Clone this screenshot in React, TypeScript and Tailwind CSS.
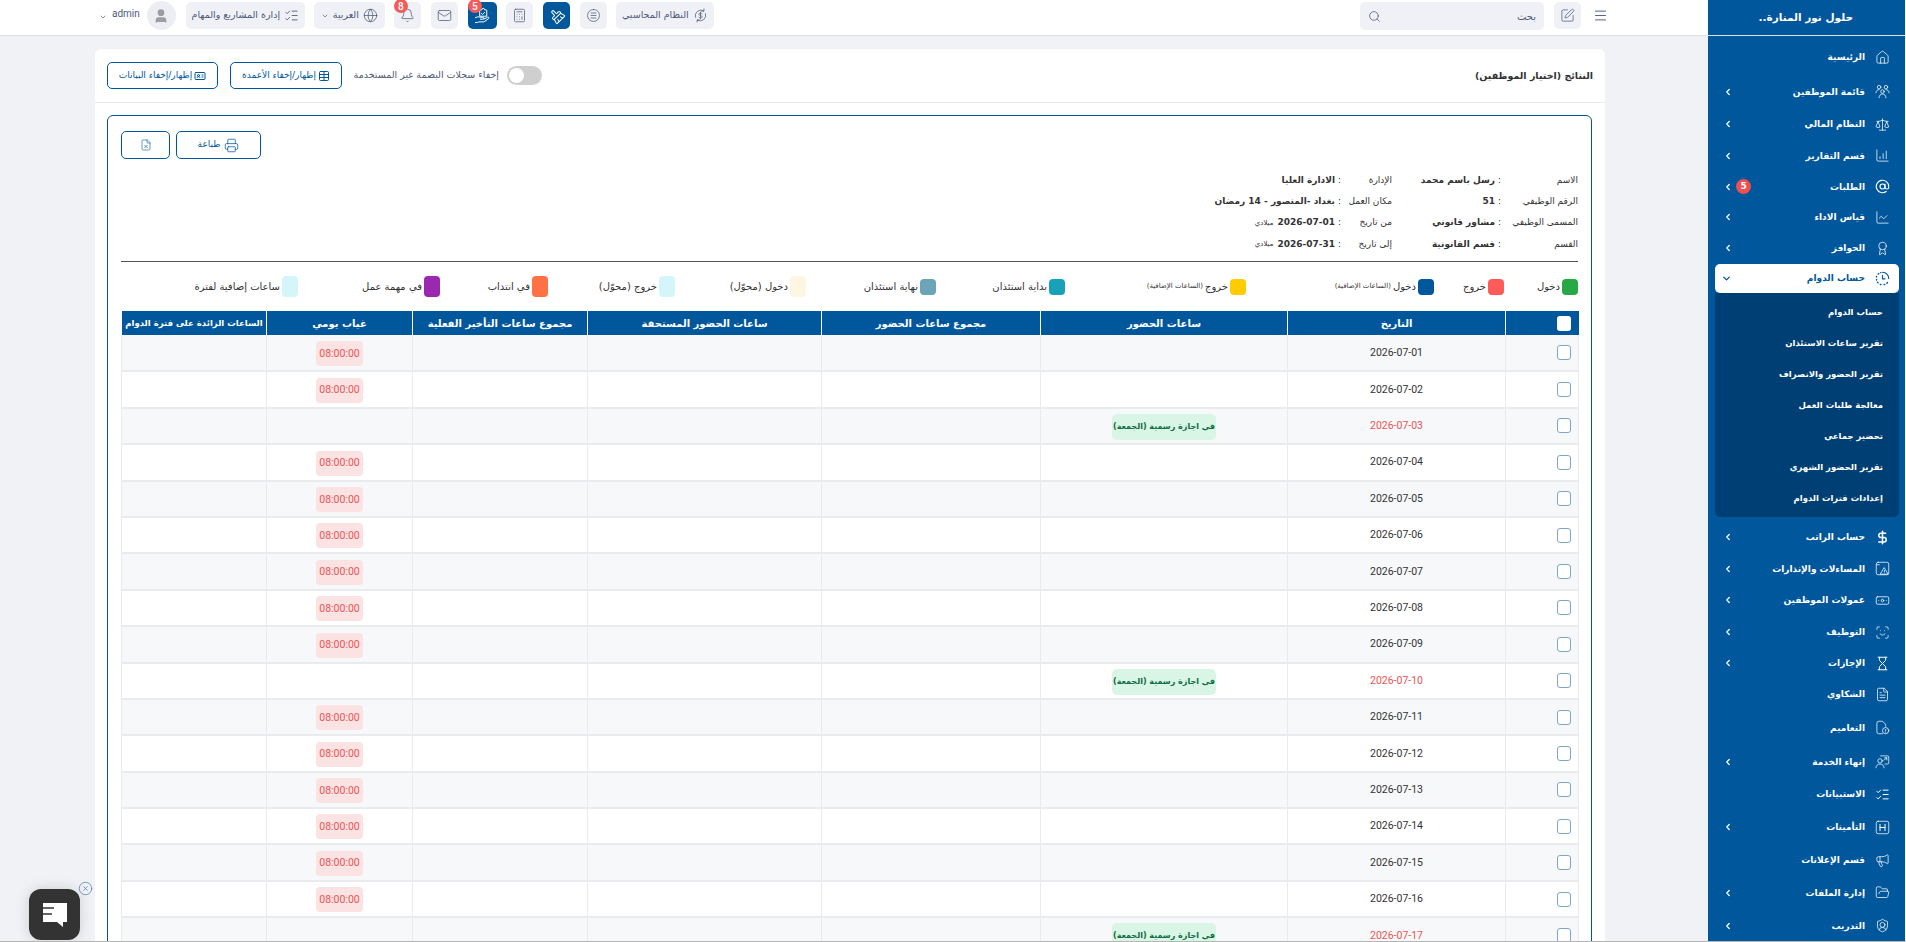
import type { ReactNode } from 'react';
import {
  AtSign,
  Award,
  Banknote,
  Bell,
  BrushCleaning,
  Calculator,
  ChartColumnIncreasing,
  ChartLine,
  ChevronDown,
  ChevronLeft,
  CircleX,
  DollarSign,
  FileText,
  FileX,
  FolderOpen,
  Globe,
  Hourglass,
  House,
  IdCard,
  ListChecks,
  Mail,
  Megaphone,
  Menu,
  Printer,
  ScanFace,
  Scale,
  Search,
  ShieldUser,
  SquarePen,
  Table,
  User,
} from 'lucide-react';

const ar = "font-['DejaVu_Sans',sans-serif]";

interface NavItem {
  label: string;
  icon: ReactNode;
  h: string;
  arrow?: boolean;
  badge?: string;
}

const ic = 'h-[15px] w-[15px]';

const Svg = ({ children, className = ic, sw = 1.2 }: { children: ReactNode; className?: string; sw?: number }) => (
  <svg viewBox="0 0 24 24" className={className} fill="none" stroke="currentColor" strokeWidth={sw} strokeLinecap="round" strokeLinejoin="round">
    {children}
  </svg>
);

const HSquare = () => (
  <Svg>
    <rect x="2" y="2" width="20" height="20" rx="3" />
    <path d="M8 7v10M16 7v10M8 12h8" strokeWidth={1.6} />
  </Svg>
);

const ThreePeople = () => (
  <Svg>
    <circle cx="6.5" cy="5" r="2.8" />
    <circle cx="17.5" cy="5" r="2.8" />
    <circle cx="12" cy="12" r="2.8" />
    <path d="M1.5 14c0-3 2-5 5-5M22.5 14c0-3-2-5-5-5M6.5 22c0-3.5 2.2-6 5.5-6s5.5 2.500 5.500 6" />
  </Svg>
);

const DashedClock = () => (
  <Svg sw={1.8}>
    <path d="M12 2a10 10 0 0 1 10 10" />
    <path d="M20 18.500l-1 1M15.500 21.500h-1M9.500 21.500h-1M5 19l-1-1M2.500 14.500v-1M2.500 9.500v-1M5 5l1-1M9 2.500h.5" strokeWidth={2.2} />
    <path d="M12 7v5.500h4" />
  </Svg>
);

const RectAlert = () => (
  <Svg>
    <rect x="2" y="2" width="20" height="20" rx="3" />
    <path d="M15 11l6 10H9zM15 15v2M15 19v.1M3 6h4" />
  </Svg>
);

const FileInfo = () => (
  <Svg>
    <path d="M12 22H6a3 3 0 0 1-3-3V5a3 3 0 0 1 3-3h6l5 5v3" />
    <circle cx="17" cy="17" r="5" />
    <path d="M17 15v2.500M17 19.500v.1" />
  </Svg>
);

const PersonBoard = () => (
  <Svg>
    <path d="M9 3h11a2 2 0 0 1 2 2v9a2 2 0 0 1-2 2h-4" />
    <circle cx="8" cy="11" r="3.500" />
    <path d="M1.500 22c0-3.500 2.800-6 6.500-6s6.500 2.500 6.500 6M14 10l5-4M15.500 6H19v3.500" />
  </Svg>
);

const ExchangeDollar = () => (
  <Svg>
    <path d="M4 15a9 9 0 0 1 13-10.500M20 9a9 9 0 0 1-13 10.500" />
    <path d="M17.500 1.500v3.500H14M6.500 22.500V19H10" />
    <path d="M14.500 9.500c-.5-1-1.400-1.500-2.500-1.500-1.500 0-2.500.8-2.500 2s1 1.700 2.500 2 2.500.8 2.500 2-1 2-2.500 2c-1.100 0-2-.5-2.500-1.500M12 6.500v11" />
  </Svg>
);

const NoteBlob = () => (
  <Svg>
    <path d="M12 2.500c5.500 0 9.500 4 9.500 9.500s-4 9.500-9.500 9.500-9.500-4-9.500-9.500 4-9.500 9.500-9.500z" />
    <path d="M8 8h8M8 12h8M8 16h8" />
  </Svg>
);

const HandClipboard = () => (
  <Svg className="h-[17px] w-[17px]" sw={1.4}>
    <path d="M9 4h2a2 2 0 0 1 4 0h2a1 1 0 0 1 1 1v8H8V5a1 1 0 0 1 1-1z" />
    <path d="M10.500 9l1.500 1.500 3-3" />
    <path d="M2 15l3-1c1.500-.5 2.500 0 3.500.5h4a1.300 1.300 0 0 1 0 2.700H9M14 17l5-2.500c1.800-.8 3 1 1.500 2L14 21H7l-2 .8L2 22" />
  </Svg>
);

const navTop: NavItem[] = [
  { label: 'الرئيسية', icon: <House className={ic} strokeWidth={1.2} />, h: 'h-[36px]' },
  { label: 'قائمة الموظفين', icon: <ThreePeople />, h: 'h-[33px]', arrow: true },
  { label: 'النظام المالي', icon: <Scale className={ic} strokeWidth={1.2} />, h: 'h-[32px]', arrow: true },
  { label: 'قسم التقارير', icon: <ChartColumnIncreasing className={ic} strokeWidth={1.2} />, h: 'h-[31px]', arrow: true },
  { label: 'الطلبات', icon: <AtSign className={ic} strokeWidth={1.8} />, h: 'h-[31px]', arrow: true, badge: '5' },
  { label: 'قياس الاداء', icon: <ChartLine className={ic} strokeWidth={1.2} />, h: 'h-[30px]', arrow: true },
  { label: 'الحوافز', icon: <Award className={ic} strokeWidth={1.2} />, h: 'h-[32px]', arrow: true },
];

const subItems = [
  'حساب الدوام',
  'تقرير ساعات الاستئذان',
  'تقرير الحضور والانصراف',
  'معالجة طلبات العمل',
  'تحضير جماعي',
  'تقرير الحضور الشهري',
  'إعدادات فترات الدوام',
];

const navBottom: NavItem[] = [
  { label: 'حساب الراتب', icon: <DollarSign className={ic} strokeWidth={2.4} />, h: 'h-[32px] mt-1', arrow: true },
  { label: 'المساءلات والإنذارات', icon: <RectAlert />, h: 'h-[31px]', arrow: true },
  { label: 'عمولات الموظفين', icon: <Banknote className={ic} strokeWidth={1.2} />, h: 'h-[32px]', arrow: true },
  { label: 'التوظيف', icon: <ScanFace className={ic} strokeWidth={1.2} />, h: 'h-[32px]', arrow: true },
  { label: 'الإجازات', icon: <Hourglass className={ic} strokeWidth={1.6} />, h: 'h-[30px]', arrow: true },
  { label: 'الشكاوي', icon: <FileText className={ic} strokeWidth={1.2} />, h: 'h-[32px]' },
  { label: 'التعاميم', icon: <FileInfo />, h: 'h-[35px]' },
  { label: 'إنهاء الخدمة', icon: <PersonBoard />, h: 'h-[33px]', arrow: true },
  { label: 'الاستبيانات', icon: <ListChecks className={ic} strokeWidth={1.6} />, h: 'h-[32px]' },
  { label: 'التأمينات', icon: <HSquare />, h: 'h-[34px]', arrow: true },
  { label: 'قسم الإعلانات', icon: <Megaphone className={ic} strokeWidth={1.2} />, h: 'h-[32px]' },
  { label: 'إدارة الملفات', icon: <FolderOpen className={ic} strokeWidth={1.2} />, h: 'h-[33px]', arrow: true },
  { label: 'التدريب', icon: <ShieldUser className={ic} strokeWidth={1.2} />, h: 'h-[33px]', arrow: true },
];

const NavRow = ({ item }: { item: NavItem }) => (
  <div className={`flex items-center pr-[16px] pl-[15px] text-white ${item.h}`}>
    <span className="flex w-[15px] shrink-0 justify-center">{item.icon}</span>
    <span className={`mr-[10px] truncate pt-[2px] text-[9px] font-bold ${item.badge ? '' : 'flex-1'}`}>{item.label}</span>
    {item.badge && (
      <span className="mr-auto ml-[3px] flex h-[15px] w-[15px] items-center justify-center rounded-full bg-[#ef4f4f] text-[9px] font-bold">
        {item.badge}
      </span>
    )}
    {item.arrow && <ChevronLeft className="h-[10px] w-[10px] shrink-0" strokeWidth={3} />}
  </div>
);

const Sidebar = () => (
  <aside dir="rtl" className={`${ar} w-[198px] shrink-0 bg-[#01579b]`}>
    <div className="flex h-[36px] items-center border-b border-[#d8e4ef] pr-[53px] text-[10.500px] font-bold text-white">
      حلول نور المنارة..
    </div>
    <div className="pt-[3px]">
      {navTop.map((item) => (
        <NavRow key={item.label} item={item} />
      ))}
    </div>
    <div className="mx-[7px]">
      <div className="flex h-[29px] items-center rounded-[5px] bg-white pr-[9px] pl-[6px] text-[#01579b]">
        <DashedClock />
        <span className="mr-[10px] flex-1 pt-[1px] text-[9px] font-bold">حساب الدوام</span>
        <ChevronDown className="h-[11px] w-[11px]" strokeWidth={3} />
      </div>
      <div className="h-[224px] rounded-b-[5px] bg-[#003f73] pt-[3px]">
        {subItems.map((s) => (
          <div key={s} className="flex h-[31px] items-center pt-[2px] pr-[16px] text-[8.500px] font-semibold text-white">
            {s}
          </div>
        ))}
      </div>
    </div>
    {navBottom.map((item) => (
      <NavRow key={item.label} item={item} />
    ))}
  </aside>
);

const TopBtn = ({ children, className = '' }: { children: ReactNode; className?: string }) => (
  <div className={`relative flex h-[27px] items-center justify-center rounded-[5px] ${className}`}>
    {children}
  </div>
);

const gray = 'bg-[#f0f1f6] text-[#4f5a78]';
const blue = 'bg-[#01579b] text-white';

const Topbar = () => (
  <header className="flex h-[36px] shrink-0 items-start justify-between border-b border-[#dfe1e6] bg-white pt-[2px] pr-[100px] pl-[99px]">
    <div className="flex items-start">
      <ChevronDown className="mt-[11px] h-[8px] w-[8px] text-[#4f5a78]" strokeWidth={2} />
      <span className="mt-[4px] ml-[5px] font-['Roboto',sans-serif] text-[10px] text-[#4f5a78]">admin</span>
      <div className="-mt-[1px] ml-[7px] flex h-[29px] w-[29px] items-center justify-center rounded-full bg-[#eceef3]">
        <User className="h-[16px] w-[16px] fill-[#9a9da3] text-[#9a9da3]" />
      </div>
      <TopBtn className={`ml-[10px] w-[119px] gap-1 ${gray}`}>
        <span dir="rtl" className={`${ar} text-[9.500px]`}>إدارة المشاريع والمهام</span>
        <ListChecks className="h-[15px] w-[15px]" strokeWidth={1.4} />
      </TopBtn>
      <TopBtn className={`ml-[9px] w-[71px] gap-1 ${gray}`}>
        <ChevronDown className="h-[8px] w-[8px]" />
        <span dir="rtl" className={`${ar} text-[9.500px]`}>العربية</span>
        <Globe className="h-[15px] w-[15px]" strokeWidth={1.2} />
      </TopBtn>
      <TopBtn className={`ml-[9px] w-[27px] ${gray}`}>
        <Bell className="h-[15px] w-[15px]" strokeWidth={1.2} />
        <span className="absolute -top-[3px] left-0 flex h-[14px] w-[14px] items-center justify-center rounded-full bg-[#f25c5c] font-['Roboto',sans-serif] text-[10px] font-medium text-white">8</span>
      </TopBtn>
      <TopBtn className={`ml-[10px] w-[27px] ${gray}`}>
        <Mail className="h-[15px] w-[15px]" strokeWidth={1.2} />
      </TopBtn>
      <TopBtn className={`ml-[10px] w-[29px] ${blue}`}>
        <HandClipboard />
        <span className="absolute -top-[3px] left-0 flex h-[14px] w-[14px] items-center justify-center rounded-full bg-[#f25c5c] font-['Roboto',sans-serif] text-[10px] font-medium text-white">5</span>
      </TopBtn>
      <TopBtn className={`ml-[9px] w-[27px] ${gray}`}>
        <Calculator className="h-[15px] w-[15px]" strokeWidth={1.2} />
      </TopBtn>
      <TopBtn className={`ml-[10px] w-[27px] ${blue}`}>
        <BrushCleaning className="h-[15px] w-[15px] -rotate-45" strokeWidth={1.6} />
      </TopBtn>
      <TopBtn className={`ml-[10px] w-[27px] ${gray}`}>
        <NoteBlob />
      </TopBtn>
      <TopBtn className={`ml-[9px] w-[98px] gap-1 ${gray}`}>
        <span dir="rtl" className={`${ar} text-[9.500px]`}>النظام المحاسبي</span>
        <ExchangeDollar />
      </TopBtn>
    </div>
    <div className="flex items-start">
      <div className="flex h-[28px] w-[184px] items-center justify-between rounded-[5px] bg-[#f0f1f6] px-[8px] text-[#4f5a78]">
        <Search className="h-[13px] w-[13px]" strokeWidth={1.4} />
        <span dir="rtl" className={`${ar} text-[10px]`}>بحث</span>
      </div>
      <TopBtn className={`ml-[10px] w-[27px] ${gray}`}>
        <SquarePen className="h-[15px] w-[15px]" strokeWidth={1.2} />
      </TopBtn>
      <Menu className="mt-[6px] ml-[12px] h-[15px] w-[15px] text-[#4f5a78]" strokeWidth={1.5} />
    </div>
  </header>
);

const infoRows = [
  ['الاسم', 'رسل باسم محمد', 'الإدارة', 'الادارة العليا', ''],
  ['الرقم الوظيفي', '51', 'مكان العمل', 'بغداد -المنصور - 14 رمضان', ''],
  ['المسمى الوظيفي', 'مشاور قانوني', 'من تاريخ', '2026-07-01', 'ميلادي'],
  ['القسم', 'قسم القانونية', 'إلى تاريخ', '2026-07-31', 'ميلادي'],
];

const legend = [
  { label: 'دخول', color: 'bg-[#28a745]', w: 'w-[74px]', tall: false },
  { label: 'خروج', color: 'bg-[#ff5b5b]', w: 'w-[70px]', tall: false },
  { label: 'دخول', small: '(الساعات الإضافية)', color: 'bg-[#01579b]', w: 'w-[188px]', tall: false },
  { label: 'خروج', small: '(الساعات الإضافية)', color: 'bg-[#ffcc00]', w: 'w-[181px]', tall: false },
  { label: 'بداية استئذان', color: 'bg-[#17a2b8]', w: 'w-[129px]', tall: false },
  { label: 'نهاية استئذان', color: 'bg-[#6ba3b8]', w: 'w-[130px]', tall: false },
  { label: 'دخول (محوّل)', color: 'bg-[#fdf6e3]', w: 'w-[131px]', tall: true },
  { label: 'خروج (محوّل)', color: 'bg-[#d4f6fb]', w: 'w-[127px]', tall: true },
  { label: 'في انتداب', color: 'bg-[#ff7043]', w: 'w-[108px]', tall: true },
  { label: 'في مهمة عمل', color: 'bg-[#9c27b0]', w: 'w-[142px]', tall: true },
  { label: 'ساعات إضافية لفترة', color: 'bg-[#d4f6fb]', w: 'w-[134px]', tall: true },
];

const headers = [
  'الساعات الزائدة على فترة الدوام',
  'غياب يومي',
  'مجموع ساعات التأخير الفعلية',
  'ساعات الحضور المستحقة',
  'مجموع ساعات الحضور',
  'ساعات الحضور',
  'التاريخ',
];
const colWidths = ['w-[145px]', 'w-[146px]', 'w-[175px]', 'w-[234px]', 'w-[219px]', 'w-[247px]', 'w-[218px]', 'w-[73px]'];

const days = Array.from({ length: 17 }, (_, i) => i + 1);

const AttendanceTable = () => (
  <table dir="ltr" className="mt-[14px] w-[1457px] table-fixed border-collapse">
    <colgroup>
      {colWidths.map((w, i) => (
        <col key={i} className={w} />
      ))}
    </colgroup>
    <thead>
      <tr className="h-[24px] bg-[#01579b] text-white">
        {headers.map((h, i) => (
          <th key={h} dir="rtl" className={`border-x border-white text-center font-bold whitespace-nowrap ${i === 0 ? 'text-[8.500px]' : 'text-[10px]'}`}>
            {h}
          </th>
        ))}
        <th className="border-l border-white pl-[51px]">
          <div className="h-[15px] w-[14px] rounded-[3px] bg-white" />
        </th>
      </tr>
    </thead>
    <tbody>
      {days.map((d) => {
        const friday = d % 7 === 3;
        const date = `2026-07-${String(d).padStart(2, '0')}`;
        return (
          <tr key={d} className={`h-[36.400px] border-b-2 border-[#e9ebee] ${d % 2 ? 'bg-[#f7f8fa]' : 'bg-white'}`}>
            <td className="border-x border-[#e9ebee]" />
            <td className="border-x border-[#e9ebee] text-center">
              {!friday && (
                <span className="inline-flex h-[25px] w-[47px] items-center justify-center rounded-[4px] bg-[#fbe3e3] font-['Roboto',sans-serif] text-[10.500px] text-[#ea5455]">
                  08:00:00
                </span>
              )}
            </td>
            <td className="border-x border-[#e9ebee]" />
            <td className="border-x border-[#e9ebee]" />
            <td className="border-x border-[#e9ebee]" />
            <td className="border-x border-[#e9ebee] text-center">
              {friday && (
                <span dir="rtl" className="inline-flex h-[26px] w-[104px] items-center justify-center rounded-[5px] bg-[#d9f5e5] text-[8px] font-bold whitespace-nowrap text-[#0f6b42]">
                  في اجازة رسمية (الجمعة)
                </span>
              )}
            </td>
            <td className={`border-x border-[#e9ebee] text-center font-['Roboto',sans-serif] text-[10.500px] ${friday ? 'text-[#ea5455]' : 'text-[#333]'}`}>
              {date}
            </td>
            <td className="border-x border-[#e9ebee] pl-[51px]">
              <div className="h-[15px] w-[14px] rounded-[3px] border border-[#7ea6cf] bg-white" />
            </td>
          </tr>
        );
      })}
    </tbody>
  </table>
);

const Report = () => (
  <div className="mt-[12px] mr-[13px] ml-[12px] h-[900px] rounded-[6px] border border-[#01579b] px-[13px] pt-[15px]">
    <div className="flex gap-[6px] text-[#01579b]">
      <button className="flex h-[28px] w-[49px] items-center justify-center rounded-[5px] border border-[#01579b]">
        <FileX className="h-[12px] w-[12px]" strokeWidth={1.2} />
      </button>
      <button className="flex h-[28px] w-[85px] items-center justify-center gap-[4px] rounded-[5px] border border-[#01579b]">
        <span dir="rtl" className="text-[9px]">طباعة</span>
        <Printer className="h-[15px] w-[15px]" strokeWidth={1.2} />
      </button>
    </div>
    <div dir="rtl" className="mt-[10px] h-[93px] border-b border-[#555] text-[9px] text-[#333]">
      {infoRows.map((r) => (
        <div key={r[0]} className="flex h-[21.300px] items-center pt-[2px]">
          <span className="w-[77px] shrink-0">{r[0]}</span>
          <span className="w-[6px] shrink-0">:</span>
          <span className="w-[103px] shrink-0 font-bold">{r[1]}</span>
          <span className="w-[51px] shrink-0">{r[2]}</span>
          <span className="w-[6px] shrink-0">:</span>
          <span className="shrink-0 font-bold">{r[3]}</span>
          {r[4] && <span className="mr-[4px] text-[7px]">{r[4]}</span>}
        </div>
      ))}
    </div>
    <div dir="rtl" className="mt-[14px] flex h-[21px] items-center text-[10px] text-[#333]">
      {legend.map((l) => (
        <div key={l.color + l.label} className={`flex shrink-0 items-center gap-[2px] ${l.w}`}>
          <span className={`w-[16px] shrink-0 rounded-[4px] ${l.color} ${l.tall ? 'h-[21px]' : 'h-[16px]'}`} />
          <span>{l.label}</span>
          {l.small && <span className="text-[7px]">{l.small}</span>}
        </div>
      ))}
    </div>
    <AttendanceTable />
  </div>
);

const App = () => (
  <div className={`${ar} relative flex h-screen w-full overflow-hidden border-b border-[#b5b5b5] bg-[#f1f2f6]`}>
    <main className="flex min-w-0 flex-1 flex-col">
      <Topbar />
      <div className="mt-[13px] ml-[95px] w-[1510px] rounded-t-[6px] bg-white">
        <div className="flex h-[54px] items-center justify-between border-b border-[#e6e8ec] px-[12px]">
          <div className="flex items-center text-[#01579b]">
            <button className="flex h-[27px] w-[111px] items-center justify-center gap-[2px] rounded-[5px] border border-[#01579b]">
              <span dir="rtl" className="text-[9px]">إظهار/إخفاء البيانات</span>
              <IdCard className="h-[12px] w-[12px]" />
            </button>
            <button className="ml-[12px] flex h-[27px] w-[112px] items-center justify-center gap-[2px] rounded-[5px] border border-[#01579b]">
              <span dir="rtl" className="text-[9px]">إظهار/إخفاء الأعمدة</span>
              <Table className="h-[12px] w-[12px]" />
            </button>
            <span dir="rtl" className="ml-[13px] w-[144px] text-[9.500px] whitespace-nowrap text-[#4f5a78]">إخفاء سجلات البصمة غير المستخدمة</span>
            <div className="ml-[8px] flex h-[19px] w-[35px] items-center rounded-full bg-[#cfcfcf] pl-[2px]">
              <div className="h-[15px] w-[15px] rounded-full bg-white" />
            </div>
          </div>
          <h2 dir="rtl" className="pt-[2px] text-[9.500px] font-bold text-[#333]">النتائج (اختيار الموظفين)</h2>
        </div>
        <Report />
      </div>
    </main>
    <Sidebar />
    <div className="absolute top-0 right-0 h-full w-px bg-white" />
    <div className="absolute bottom-[1px] left-[29px] flex h-[51px] w-[51px] items-center justify-center rounded-[12px] bg-[#333] shadow-[0_0_14px_rgba(0,0,0,0.15)]">
      <svg viewBox="0 0 26 26" className="h-[26px] w-[26px]">
        <path d="M1 1h24v19h-4v5l-6-5H1z" fill="#fff" />
        <path d="M0 6h12M0 12h10" stroke="#333" strokeWidth="1.5" />
      </svg>
    </div>
    <CircleX className="absolute bottom-[45px] left-[78px] h-[15px] w-[15px] text-[#5a7ab0]" strokeWidth={1.2} />
  </div>
);

export default App;
